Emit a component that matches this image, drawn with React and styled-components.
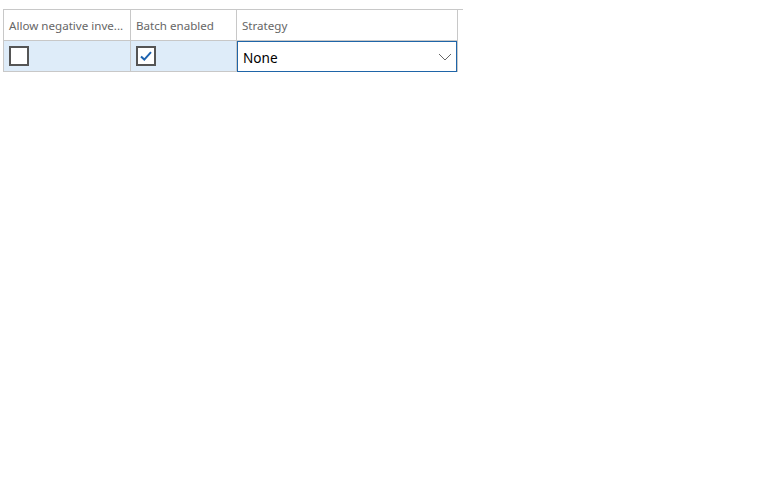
import React from "react";
import styled, { createGlobalStyle } from "styled-components";

const Global = createGlobalStyle`
  html, body { margin: 0; padding: 0; background: #fff; }
  body { font-family: "Noto Sans", "Open Sans", sans-serif; }
`;

const Page = styled.div`
  padding: 9px 0 0 3px;
`;

const Grid = styled.div`
  display: grid;
  grid-template-columns: 127px 106px 221px 6px;
  width: 460px;
  border-top: 1px solid #c8c8c8;
`;

const HeaderCell = styled.div`
  height: 31px;
  box-sizing: border-box;
  border-left: ${(p) => (p.$noLeft ? "none" : "1px solid #c8c8c8")};
  border-bottom: ${(p) => (p.$noBottom ? "none" : "1px solid #c8c8c8")};
  padding: 1px 5px 0;
  display: flex;
  align-items: center;
  font-size: 11.6px;
  color: #666;
  white-space: nowrap;
  overflow: hidden;
`;

const BodyCell = styled.div`
  height: 31px;
  box-sizing: border-box;
  border-left: ${(p) => (p.$noLeft ? "none" : "1px solid #c8c8c8")};
  border-bottom: ${(p) => (p.$noBottom ? "none" : "1px solid #c8c8c8")};
  background: ${(p) => p.$bg || "transparent"};
  padding: ${(p) => p.$pad || "0 5px"};
  display: flex;
  align-items: center;
`;

const Box = styled.div`
  width: 20px;
  height: 20px;
  box-sizing: border-box;
  border: 2px solid #555;
  background: #fff;
  display: flex;
  align-items: center;
  justify-content: center;
`;

const Select = styled.div`
  flex: 1;
  align-self: stretch;
  box-sizing: border-box;
  border: 1px solid #1f65a8;
  background: #fff;
  display: flex;
  align-items: center;
  justify-content: space-between;
  padding: 1px 4px 0 5px;
  font-size: 13.6px;
  color: #000;
`;

function Check({ checked }) {
  return (
    <Box>
      {checked && (
        <svg width="14" height="14" viewBox="0 0 14 14">
          <path d="M2 7.5 L5.3 10.6 L12 3.2" fill="none" stroke="#1d63b0" strokeWidth="2" />
        </svg>
      )}
    </Box>
  );
}

export default function App() {
  return (
    <>
      <Global />
      <Page>
        <Grid>
          <HeaderCell>Allow negative inve...</HeaderCell>
          <HeaderCell>Batch enabled</HeaderCell>
          <HeaderCell>Strategy</HeaderCell>
          <HeaderCell $noBottom />
          <BodyCell $bg="#deecf9">
            <Check />
          </BodyCell>
          <BodyCell $bg="#deecf9">
            <Check checked />
          </BodyCell>
          <BodyCell $pad="0" $noBottom>
            <Select>
              <span>None</span>
              <svg width="14" height="8" viewBox="0 0 14 8">
                <path d="M1 1 L7 7 L13 1" fill="none" stroke="#666" strokeWidth="1" />
              </svg>
            </Select>
          </BodyCell>
          <BodyCell $noBottom />
        </Grid>
      </Page>
    </>
  );
}
